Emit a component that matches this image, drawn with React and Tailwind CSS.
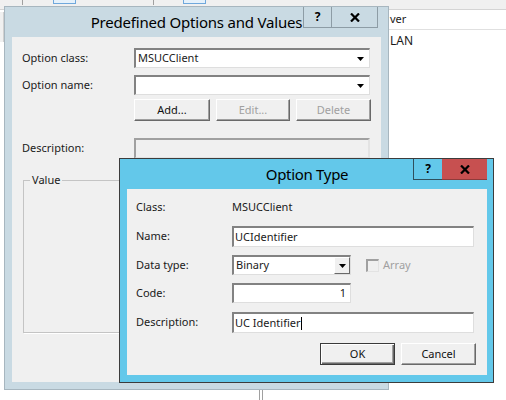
import React from "react";

const sunken =
  "border-t-2 border-l-2 border-r border-b border-t-[#828282] border-l-[#828282] border-r-[#dedede] border-b-[#dedede] bg-white";

function Arrow() {
  return (
    <svg width="7" height="4" viewBox="0 0 7 4">
      <path d="M0 0 H7 L3.5 4 Z" fill="#000" />
    </svg>
  );
}

function CloseX() {
  return (
    <svg width="10" height="9" viewBox="0 0 10 9">
      <path d="M1 0.5 L9 8.5 M9 0.5 L1 8.5" stroke="#000" strokeWidth="2.2" />
    </svg>
  );
}

function Combo({ w, value, boxed }) {
  return (
    <div className={`${sunken} ${w} h-full flex items-center`}>
      <span className="flex-1 pl-[2px] truncate">{value}</span>
      {boxed ? (
        <div className="w-[16px] h-full flex items-center justify-center bg-[#f0f0f0] border-l border-t border-l-[#fff] border-t-[#fff] border-r border-b border-r-[#696969] border-b-[#696969]">
          <Arrow />
        </div>
      ) : (
        <div className="w-[18px] h-full flex items-center justify-center">
          <Arrow />
        </div>
      )}
    </div>
  );
}

function Btn({ children, w, disabled, def }) {
  return (
    <div
      className={`${w} h-[22px] flex items-center justify-center bg-[#f0f0f0] border ${
        def
          ? "border-[#3a3a3a] shadow-[inset_1px_1px_0_#fff,inset_-1px_-1px_0_#696969,inset_-2px_-2px_0_#a0a0a0]"
          : "border-t-[#fff] border-l-[#fff] border-r-[#696969] border-b-[#696969] shadow-[inset_-1px_-1px_0_#a0a0a0]"
      } ${disabled ? "text-[#a0a0a0]" : "text-[#111]"}`}
    >
      {children}
    </div>
  );
}

export default function App() {
  return (
    <div className="relative w-[506px] h-[400px] bg-white overflow-hidden font-['Noto_Sans',sans-serif] text-[11px] text-[#1a1a1a]">
      {/* background window chrome */}
      <div className="absolute left-0 top-0 w-[506px] h-[10px] bg-[#f0f0f0] border-b border-[#d4d4d4]">
        <div className="absolute left-[22px] top-0 h-[5px] w-px bg-[#a0a0a0]" />
        <div className="absolute left-[53px] -top-[10px] h-[14px] w-[23px] border border-[#6fa8dc] bg-[#e5f1fb]" />
        <div className="absolute left-[153px] top-0 h-[5px] w-px bg-[#a0a0a0]" />
        <div className="absolute left-[183px] -top-[10px] h-[14px] w-[23px] border border-[#6fa8dc] bg-[#e5f1fb]" />
      </div>
      <div className="absolute left-[389px] top-[10px] w-[117px] h-[20px] border-b border-[#e0e0e0] flex items-center pl-[1px] text-[11px]">
        ver
      </div>
      <div className="absolute left-[389px] top-[32px] pl-[1px] text-[12px]">LAN</div>
      <div className="absolute left-0 top-[12px] w-[4px] h-[30px] bg-[#f0f0f0] border-r border-[#d0d0d0]" />
      <div className="absolute left-[259px] top-[390px] w-[4px] h-[10px] border-l border-r border-[#a0a0a0]" />

      {/* Predefined Options and Values (inactive) */}
      <div className="absolute left-[4px] top-[6px] w-[385px] h-[384px] bg-[#c9dae3] border border-[#a7b6bf] flex flex-col px-[7px] pb-[7px]">
        <div className="relative h-[30px] shrink-0 flex items-center justify-center">
          <span className="text-[15px] tracking-[-0.2px] text-[#000] mt-[1px]">Predefined Options and Values</span>
          <div className="absolute right-[3px] top-0 h-[21px] flex border-l border-b border-r border-[#8d9ca5]">
            <div className="w-[28px] flex items-center justify-center border-r border-[#8d9ca5] font-bold text-[12px] text-[#000]">?</div>
            <div className="w-[45px] flex items-center justify-center">
              <CloseX />
            </div>
          </div>
        </div>
        <div className="flex-1 bg-[#f0f0f0] flex flex-col pl-[10px]">
          <div className="mt-[11px] h-[20px] flex items-center">
            <span className="w-[112px]">Option class:</span>
            <Combo w="w-[236px]" value="MSUCClient" />
          </div>
          <div className="mt-[7px] h-[20px] flex items-center">
            <span className="w-[112px]">Option name:</span>
            <Combo w="w-[236px]" value="" />
          </div>
          <div className="mt-[4px] flex ml-[112px] gap-[6px]">
            <Btn w="w-[76px]">Add...</Btn>
            <Btn w="w-[74px]" disabled>Edit...</Btn>
            <Btn w="w-[75px]" disabled>Delete</Btn>
          </div>
          <div className="mt-[17px] h-[21px] flex items-center">
            <span className="w-[112px]">Description:</span>
            <div className="w-[236px] h-full border-2 border-t-[#a0a0a0] border-l-[#a0a0a0] border-r-[#e3e3e3] border-b-[#e3e3e3] bg-[#f0f0f0]" />
          </div>
          <div className="relative mt-[21px] ml-[1px] w-[347px] h-[153px] border border-[#c4c4c4] shadow-[1px_1px_0_#fff]">
            <span className="absolute -top-[9px] left-[6px] px-[2px] bg-[#f0f0f0]">Value</span>
          </div>
        </div>
      </div>

      {/* Option Type (active) */}
      <div className="absolute left-[119px] top-[158px] w-[375px] h-[225px] bg-[#63c8ea] border border-[#3c3c3c] flex flex-col pl-[7px] pr-[6px] pb-[7px]">
        <div className="relative h-[30px] shrink-0 flex items-center justify-center">
          <span className="text-[15px] tracking-[-0.3px] text-[#000] mt-[0px]">Option Type</span>
          <div className="absolute right-[0px] top-0 h-[21px] flex">
            <div className="w-[29px] flex items-center justify-center border-l border-b border-[#2f4f5c] font-bold text-[12px] text-[#000]">?</div>
            <div className="w-[45px] flex items-center justify-center bg-[#c75050] border-b border-[#8e3b3b]">
              <CloseX />
            </div>
          </div>
        </div>
        <div className="flex-1 bg-[#f0f0f0] flex flex-col pl-[9px]">
          <div className="mt-[8px] h-[20px] flex items-center">
            <span className="w-[96px]">Class:</span>
            <span>MSUCClient</span>
          </div>
          <div className="mt-[9px] h-[21px] flex items-center">
            <span className="w-[96px]">Name:</span>
            <div className={`${sunken} w-[242px] h-full flex items-center pl-[1px]`}>UCIdentifier</div>
          </div>
          <div className="mt-[8px] h-[20px] flex items-center">
            <span className="w-[96px]">Data type:</span>
            <Combo w="w-[119px]" value="Binary" boxed />
            <div className="ml-[15px] w-[13px] h-[13px] border-t-2 border-l-2 border-r border-b border-t-[#a0a0a0] border-l-[#a0a0a0] border-r-[#e3e3e3] border-b-[#e3e3e3] bg-[#f0f0f0]" />
            <span className="ml-[4px] text-[#a0a0a0]">Array</span>
          </div>
          <div className="mt-[8px] h-[20px] flex items-center">
            <span className="w-[96px]">Code:</span>
            <div className={`${sunken} w-[119px] h-full flex items-center justify-end pr-[4px]`}>1</div>
          </div>
          <div className="mt-[9px] h-[21px] flex items-center">
            <span className="w-[96px]">Description:</span>
            <div className={`${sunken} w-[242px] h-full flex items-center pl-[1px]`}>
              UC Identifier<span className="inline-block w-px h-[13px] bg-black" />
            </div>
          </div>
          <div className="mt-[10px] flex justify-end pr-[11px] gap-[6px]">
            <Btn w="w-[75px]" def>OK</Btn>
            <Btn w="w-[75px]">Cancel</Btn>
          </div>
        </div>
      </div>
    </div>
  );
}
